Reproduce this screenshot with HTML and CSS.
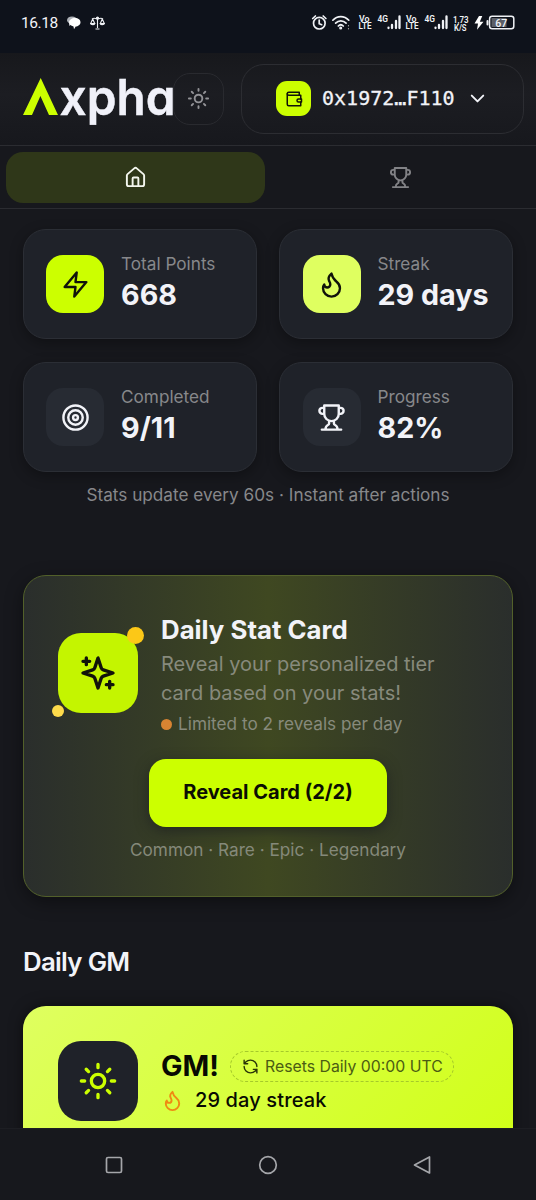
FILE: index.html
```html
<!DOCTYPE html>
<html lang="en">
<head>
<meta charset="utf-8">
<title>Axpha</title>
<link rel="stylesheet" href="styles.css">
</head>
<body>
<svg class="defs" width="0" height="0" aria-hidden="true">
  <symbol id="sun" viewBox="0 0 24 24"><circle cx="12" cy="12" r="4"/><path d="M12 2v2M12 20v2M4.93 4.93l1.41 1.41M17.66 17.66l1.41 1.41M2 12h2M20 12h2M6.34 17.66l-1.41 1.41M19.07 4.93l-1.41 1.41"/></symbol>
  <symbol id="trophy" viewBox="0 0 24 24"><path d="M6 9H4.5a2.5 2.5 0 0 1 0-5H6M18 9h1.500a2.500 2.500 0 0 0 0-5H18M4 22h16M10 14.660V17c0 .55-.47.98-.97 1.210C7.850 18.750 7 20.240 7 22M14 14.660V17c0 .55.47.98.97 1.210C16.150 18.750 17 20.240 17 22M18 2H6v7a6 6 0 0 0 12 0V2Z"/></symbol>
  <symbol id="flame" viewBox="0 0 24 24"><path d="M8.500 14.500A2.500 2.500 0 0 0 11 12c0-1.380-.5-2-1-3-1.072-2.143-.224-4.054 2-6 .5 2.500 2 4.900 4 6.500 2 1.600 3 3.500 3 5.500a7 7 0 1 1-14 0c0-1.153.433-2.294 1-3a2.500 2.500 0 0 0 2.500 2.500z"/></symbol>
</svg>
<div class="screen">
  <div class="status">
    <div class="status-left">
      <span class="clock">16.18</span>
      <svg class="chat" width="14" height="14" viewBox="0 0 14 14"><path fill="#aeb1b7" d="M5 .5c3 0 5 1.500 5 3.800S8 8 5 8L2 10V7C.8 6.300 0 5.500 0 4.300 0 2 2 .5 5 .5z"/><path fill="#fff" d="M8 2c3.300 0 5.500 1.800 5.500 4.300S11 10.500 8.700 10.500L7 13.200l-.5-2.800C4 10 2 8.600 2 6.300S4.700 2 8 2z"/></svg>
      <svg class="scales" width="15" height="14" viewBox="0 0 15 14" fill="none" stroke="#eef0f4" stroke-width="1.100"><path d="M7.500 1v11M5.500 13h4M2 3c2-1.500 3.500-.5 5.500 0 2-.5 3.500-1.500 5.500 0M2.700 3 .7 7.500M2.700 3l2 4.500M12.300 3l-2 4.500M12.300 3l2 4.500"/><path fill="#eef0f4" d="M.5 7.500h4.300c-.4 1.500-3.900 1.500-4.300 0zM10.200 7.500h4.300c-.4 1.500-3.900 1.500-4.300 0z"/><circle cx="7.500" cy="2" r="1" fill="#eef0f4"/></svg>
    </div>
    <svg class="status-right" width="206" height="20" viewBox="310 13 206 20" fill="none" stroke="#f0f2f6" stroke-linecap="round">
      <g stroke-width="1.700"><circle cx="319.300" cy="23.200" r="5.800"/><path d="M319.200 20v3.700l2.500 1M312.700 18.500l2.700-2.500M325.900 18.500l-2.700-2.500"/></g>
      <g stroke-width="1.700"><path d="M332.800 20.200c4.500-4.900 11.500-4.900 16 0M335.600 23.200c3-3.200 7.500-3.200 10.500 0M338.300 26c1.500-1.500 3.500-1.500 5 0"/><circle cx="340.700" cy="28" r=".7" fill="#fff"/></g>
      <path stroke-width="1.200" stroke="#aaa" d="M348.500 25.500v.3M348.500 28.500v.3"/>
      <g class="tiny">
        <text x="359" y="21.500" textLength="10.500" lengthAdjust="spacingAndGlyphs">Vo</text><text x="358.500" y="29.300" textLength="13" lengthAdjust="spacingAndGlyphs">LTE</text>
        <text x="377.500" y="22.200" textLength="10.500" lengthAdjust="spacingAndGlyphs">4G</text>
        <text x="406" y="21.500" textLength="10.500" lengthAdjust="spacingAndGlyphs">Vo</text><text x="405.500" y="29.300" textLength="13" lengthAdjust="spacingAndGlyphs">LTE</text>
        <text x="424.500" y="22.200" textLength="10.500" lengthAdjust="spacingAndGlyphs">4G</text>
        <text x="453" y="23" textLength="15.500" lengthAdjust="spacingAndGlyphs">1,73</text><text x="454" y="30.800" textLength="12.500" lengthAdjust="spacingAndGlyphs">K/S</text>
      </g>
      <g stroke-width="2.300"><path d="M388.500 28v-.3M392 28v-3M396 28v-7M399.500 28V16.500M435.500 28v-.3M439 28v-3M443 28v-7M446.500 28V16.500"/></g>
      <path fill="#fff" stroke="none" d="M479 16l-4.500 7.500h3.500l-1 6.200 6.500-8h-3.700l2.500-5.700z"/>
      <path stroke-width="2" d="M487.500 21v3.500"/>
      <rect x="489.600" y="16.300" width="24.200" height="12.400" rx="2.500" stroke-width="1.500"/>
      <rect x="491.500" y="18" width="15" height="9" fill="#5c5f67" stroke="none"/>
      <text class="pct" x="495.300" y="26.600" textLength="12" lengthAdjust="spacingAndGlyphs">67</text>
    </svg>
  </div>

  <header class="header">
    <svg class="logo" width="151" height="60" viewBox="22 68 151 60"><path fill="#cf0" d="M40.700 77 58 114H49L40.400 95 32 114H23z"/><text class="wordmark" x="59.500" y="113.500" textLength="116" lengthAdjust="spacingAndGlyphs">xpha</text></svg>
    <button class="theme"><svg class="icon" width="23" height="23"><use href="#sun"/></svg></button>
    <button class="wallet">
      <span class="wallet-icon"><svg class="icon" width="18" height="18" viewBox="0 0 24 24"><path d="M21 12V7H5a2 2 0 0 1 0-4h14v4"/><path d="M3 5v14a2 2 0 0 0 2 2h16v-5"/><path d="M18 12a2 2 0 0 0 0 4h4v-4Z"/></svg></span>
      <span class="address">0x1972…F110</span>
      <svg class="icon chevron" width="23" height="23" viewBox="0 0 24 24"><path d="m6 9 6 6 6-6"/></svg>
    </button>
  </header>

  <nav class="tabs">
    <a class="tab active"><svg class="icon" width="23" height="23" viewBox="0 0 24 24"><path d="M15 21v-8a1 1 0 0 0-1-1h-4a1 1 0 0 0-1 1v8"/><path d="M3 10a2 2 0 0 1 .709-1.528l7-5.999a2 2 0 0 1 2.582 0l7 5.999A2 2 0 0 1 21 10v9a2 2 0 0 1-2 2H5a2 2 0 0 1-2-2z"/></svg></a>
    <a class="tab"><svg class="icon" width="23" height="23"><use href="#trophy"/></svg></a>
  </nav>

  <main class="content">
    <section class="stats">
      <div class="stat"><span class="tile lime"><svg class="icon" width="29" height="29" viewBox="0 0 24 24"><path d="M13 2 3 14h9l-1 8 10-12h-9l1-8z"/></svg></span><div><div class="label">Total Points</div><div class="value">668</div></div></div>
      <div class="stat"><span class="tile pale"><svg class="icon" width="29" height="29"><use href="#flame"/></svg></span><div><div class="label">Streak</div><div class="value">29 days</div></div></div>
      <div class="stat"><span class="tile"><svg class="icon" width="29" height="29" viewBox="0 0 24 24"><circle cx="12" cy="12" r="10"/><circle cx="12" cy="12" r="6"/><circle cx="12" cy="12" r="2"/></svg></span><div><div class="label">Completed</div><div class="value">9/11</div></div></div>
      <div class="stat"><span class="tile"><svg class="icon" width="29" height="29"><use href="#trophy"/></svg></span><div><div class="label">Progress</div><div class="value">82%</div></div></div>
    </section>
    <p class="note">Stats update every 60s · Instant after actions</p>

    <section class="reveal">
      <div class="reveal-top">
        <span class="big-tile spark"><svg class="icon" width="40" height="40" viewBox="0 0 24 24"><path d="m12 3-1.912 5.813a2 2 0 0 1-1.275 1.275L3 12l5.813 1.912a2 2 0 0 1 1.275 1.275L12 21l1.912-5.813a2 2 0 0 1 1.275-1.275L21 12l-5.813-1.912a2 2 0 0 1-1.275-1.275L12 3Z"/><path d="M5 3v4M19 17v4M3 5h4M17 19h4"/></svg><i class="dot-a"></i><i class="dot-b"></i></span>
        <div>
          <h2 class="reveal-title">Daily Stat Card</h2>
          <p class="desc">Reveal your personalized tier<br>card based on your stats!</p>
          <p class="limit"><i class="dot-c"></i><span>Limited to 2 reveals per day</span></p>
        </div>
      </div>
      <button class="cta">Reveal Card (2/2)</button>
      <p class="tiers">Common · Rare · Epic · Legendary</p>
    </section>

    <h2 class="heading">Daily GM</h2>
    <section class="gm">
      <span class="big-tile dark"><svg class="icon" width="40" height="40"><use href="#sun"/></svg></span>
      <div>
        <div class="gm-row"><span class="gm-title">GM!</span><span class="pill"><svg class="icon" width="17" height="17" viewBox="0 0 24 24"><path d="M21 12a9 9 0 0 0-9-9 9.750 9.750 0 0 0-6.740 2.740L3 8M3 3v5h5M3 12a9 9 0 0 0 9 9 9.750 9.750 0 0 0 6.740-2.740L21 16M16 16h5v5"/></svg><span class="pill-text">Resets Daily 00:00 UTC</span></span></div>
        <div class="streak"><svg class="icon" width="23" height="23"><use href="#flame"/></svg><span>29 day streak</span></div>
      </div>
    </section>
  </main>

  <footer class="sysnav">
    <svg width="18" height="18" viewBox="0 0 18 18"><rect x="1.500" y="1.500" width="15" height="15" rx="1.500"/></svg>
    <svg width="20" height="20" viewBox="0 0 20 20"><circle cx="10" cy="10" r="8.300"/></svg>
    <svg width="18" height="20" viewBox="0 0 18 20"><path stroke-linejoin="round" d="M1.500 10 16.500 2v16z"/></svg>
  </footer>
</div>
</body>
</html>
```
FILE: styles.css
```css
* { box-sizing: border-box; }
body, h2, p { margin: 0; }
body { background: #17181d; font-family: Inter, "Liberation Sans", sans-serif; color: #f2f3f8; }
button { font: inherit; color: inherit; padding: 0; border: 0; }
i { display: block; border-radius: 50%; }
.defs { position: absolute; }
.icon { display: block; flex: none; fill: none; stroke: currentColor; stroke-width: 2; stroke-linecap: round; stroke-linejoin: round; overflow: visible; }
.screen { width: 536px; height: 1200px; overflow: hidden; display: flex; flex-direction: column; }

.status { height: 53px; flex: none; background: #0e121b; display: flex; justify-content: space-between; align-items: flex-start; padding: 13px 20px 0 21px; }
.status-left { display: flex; align-items: center; height: 20px; }
.clock { font: 400 15.500px/20px Roboto, sans-serif; letter-spacing: -.45px; width: 46px; }
.scales { margin-left: 9px; }
.tiny text { font: 600 9px Roboto, sans-serif; fill: #f0f2f6; stroke: none; }
.pct { font: 500 11px Roboto, sans-serif; fill: #f0f2f6; stroke: none; }

.header { height: 93px; flex: none; display: flex; align-items: center; padding: 0 12px 1px 22px; border-bottom: 1px solid #2b2c31; background: linear-gradient(#17181c, #1c1d22 45%, #17181d); }
.logo { flex: none; overflow: visible; }
.wordmark { font: 600 50px Inter, sans-serif; font-feature-settings: "cv11"; fill: #f0f1f9; stroke: #f0f1f9; stroke-width: .5px; }
.theme { width: 51px; height: 52px; border: 1px solid #292a2f; border-radius: 17px; background: transparent; color: #929296; display: grid; place-items: center; }
.wallet { margin-left: auto; width: 283px; height: 70px; border: 1px solid #2c2d32; border-radius: 23px; background: transparent; display: flex; align-items: center; padding-left: 34px; }
.wallet-icon { width: 35px; height: 35px; border-radius: 11px; background: #cf0; color: #111308; display: grid; place-items: center; }
.address { margin-left: 11px; font: 400 20px/28px "DejaVu Sans Mono", monospace; -webkit-text-stroke: .3px; letter-spacing: .02px; padding-bottom: 1px; }
.chevron { margin-left: 11px; }

.tabs { height: 63px; flex: none; display: grid; grid-template-columns: 259px 1fr; padding: 6px 0 5px 6px; border-bottom: 1px solid #2b2c31; }
.tab { color: #828286; display: grid; place-items: center; border-radius: 17px; }
.tab.active { color: #f4f6ee; background: #2f3719; }

.content { flex: 1; min-height: 0; overflow: hidden; padding: 20px 23px 0; }
.stats { display: grid; grid-template-columns: 1fr 1fr; gap: 23px 22px; }
.stat { height: 110px; border: 1px solid #2b2e35; border-radius: 23px; background: #1f2229; box-shadow: 0 4px 14px rgba(0,0,0,.32); display: flex; align-items: center; gap: 17px; padding: 0 0 0 22px; }
.stat:nth-child(even) { padding-left: 22.500px; }
.tile { width: 58px; height: 58px; flex: none; border-radius: 17px; background: #272b33; display: grid; place-items: center; }
.lime { background: #cf0; color: #11130a; }
.pale { background: #dfff60; color: #11130a; }
.label { font-size: 17.200px; line-height: 24px; color: #87888b; margin-top: -4px; }
.value { font-size: 28.700px; line-height: 36px; font-weight: 700; padding-top: 1px; }
.note { margin-top: 11px; font-size: 17.200px; line-height: 24px; color: #87888b; text-align: center; }

.reveal { margin-top: 68px; height: 322px; border: 1px solid #52602a; border-radius: 23px; background: linear-gradient(90deg, #2a2e2c, #3f4821 50%, #2a2e2c); box-shadow: 0 5px 18px rgba(0,0,0,.4); padding-top: 37px; text-align: center; }
.reveal-top { display: flex; text-align: left; gap: 23px; padding-left: 34px; }
.big-tile { position: relative; flex: none; width: 80px; height: 80px; border-radius: 23px; display: grid; place-items: center; }
.spark { margin-top: 20px; background: #c4f500; color: #11130a; }
.dot-a { position: absolute; right: -6px; top: -6px; width: 17px; height: 17px; background: #fcc817; }
.dot-b { position: absolute; left: -6px; bottom: -4px; width: 12px; height: 12px; background: #fedb4b; }
.reveal-title { font-size: 25.800px; line-height: 34px; font-weight: 700; }
.desc { font-size: 20px; line-height: 28.700px; color: #878a7c; margin-top: 3px; }
.limit { display: flex; align-items: center; gap: 6px; font-size: 17.200px; line-height: 24px; color: #878a7c; margin-top: 5px; }
.dot-c { width: 11px; height: 11px; background: #d98432; }
.cta { display: block; margin: 23px auto 0; width: 238px; height: 68px; border-radius: 17px; background: #cf0; color: #0b0e03; font-size: 20px; font-weight: 650; padding-bottom: 2px; box-shadow: 0 4px 14px rgba(25,28,30,.65); }
.tiers { margin-top: 11px; font-size: 17.200px; line-height: 24px; color: #85897a; }

.heading { margin-top: 48px; font-size: 25.800px; line-height: 34px; font-weight: 600; letter-spacing: -.7px; }
.gm { margin-top: 27px; height: 340px; border-radius: 23px; background: linear-gradient(135deg, #dfff60, #cf0); box-shadow: 0 0 14px rgba(0,0,0,.5); padding: 35px; display: flex; gap: 23px; color: #080a02; }
.dark { background: #1f2229; color: #cf0; }
.gm-row { display: flex; align-items: center; height: 30px; margin-top: 10px; }
.gm-title { width: 69px; font-size: 28.700px; font-weight: 700; line-height: 30px; }
.pill { width: 224px; height: 31px; border: 1px dashed #a5c92b; border-radius: 16px; display: flex; align-items: center; gap: 6px; padding-left: 11px; color: #4b5c13; font-size: 15.800px; white-space: nowrap; }
.pill .icon { color: #283308; }
.streak { display: flex; align-items: center; gap: 11px; height: 30px; margin-top: 4px; font-size: 20px; font-weight: 500; letter-spacing: .12px; }
.streak .icon { color: #ef8a12; }

.sysnav { height: 72px; flex: none; border-top: 1px solid #1d1e23; background: #17181d; display: flex; align-items: center; justify-content: space-between; padding: 1px 105px 0; }
.sysnav svg { fill: none; stroke: #a5a6aa; stroke-width: 1.700; }
```
